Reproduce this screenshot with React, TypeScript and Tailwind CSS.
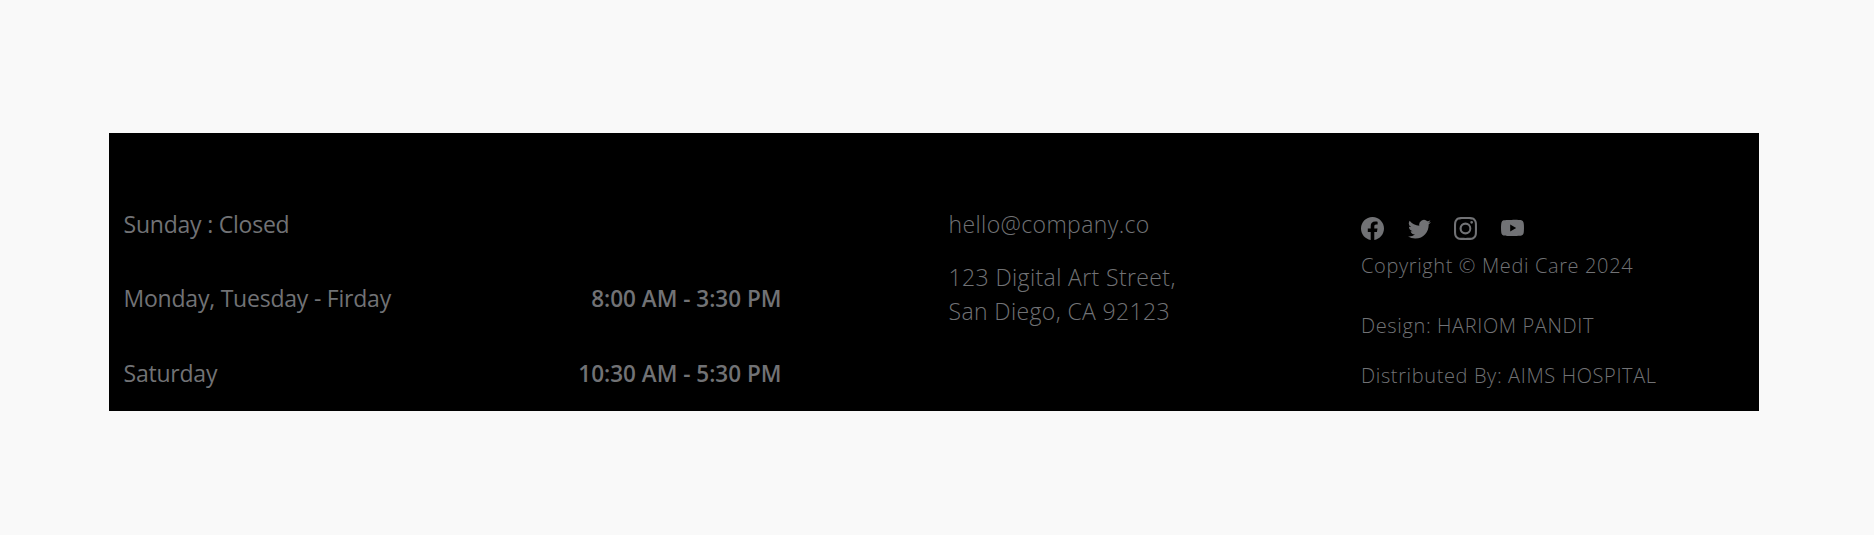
import { BsFacebook, BsTwitter, BsInstagram, BsYoutube } from "react-icons/bs";

const hours = [
  { day: "Monday, Tuesday - Firday", time: "8:00 AM - 3:30 PM" },
  { day: "Saturday", time: "10:30 AM - 5:30 PM" },
];

const socials = [BsFacebook, BsTwitter, BsInstagram, BsYoutube];

export default function App() {
  return (
    <div className="flex h-[535px] w-full items-start bg-[#f9f9f9] pt-[133px] pl-[109px] font-['Open_Sans',sans-serif] text-[#717275]">
      <footer className="grid h-[278px] w-[1650px] grid-cols-[825px_412px_413px] bg-black">
        <section className="pt-[75px] pr-[152.5px] pl-[14.5px] text-[23px] leading-[32px] tracking-[-0.22px]">
          <p>Sunday : Closed</p>
          <div className="mt-[42px] flex flex-col gap-[43px]">
            {hours.map((h) => (
              <p key={h.day} className="flex h-[32px] items-baseline justify-between">
                <span>{h.day}</span>
                <span className="text-[22.5px] font-semibold tracking-normal">{h.time}</span>
              </p>
            ))}
          </div>
        </section>
        <section className="pt-[75px] pl-[14.5px] text-[23px] leading-[32px] font-light tracking-[0.38px]">
          <p>hello@company.co</p>
          <p className="mt-[21px]">123 Digital Art Street,</p>
          <p className="mt-[2px]">San Diego, CA 92123</p>
        </section>
        <section className="pt-[84px] pl-[15px] text-[20px] leading-[29px] font-light tracking-[0.625px]">
          <div className="flex h-[24px] gap-[23.5px]">
            {socials.map((Icon, i) => (
              <Icon key={i} className="size-[23px]" />
            ))}
          </div>
          <p className="mt-[10px]">Copyright © Medi Care 2024</p>
          <p className="mt-[31px]">Design: HARIOM PANDIT</p>
          <p className="mt-[21px]">Distributed By: AIMS HOSPITAL</p>
        </section>
      </footer>
    </div>
  );
}
